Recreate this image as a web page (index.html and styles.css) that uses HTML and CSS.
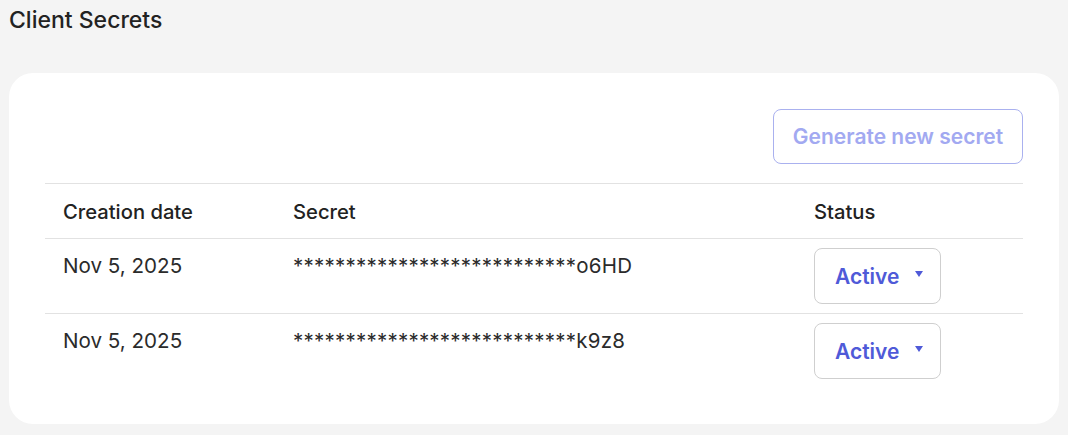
FILE: index.html
```html
<!DOCTYPE html>
<html lang="en">
<head>
<meta charset="utf-8">
<title>Client Secrets</title>
<link rel="stylesheet" href="styles.css">
</head>
<body>
<main class="page">
  <h1 class="title">Client Secrets</h1>
  <section class="card">
    <div class="actions">
      <button class="btn-generate" type="button">Generate new secret</button>
    </div>
    <div class="table">
      <div class="row head">
        <div class="cell">Creation date</div>
        <div class="cell">Secret</div>
        <div class="cell">Status</div>
      </div>
      <div class="row">
        <div class="cell">Nov 5, 2025</div>
        <div class="cell secret">***************************o6HD</div>
        <div class="cell status">
          <button class="select" type="button"><span>Active</span><span class="caret"></span></button>
        </div>
      </div>
      <div class="row last">
        <div class="cell">Nov 5, 2025</div>
        <div class="cell secret">***************************k9z8</div>
        <div class="cell status">
          <button class="select" type="button"><span>Active</span><span class="caret"></span></button>
        </div>
      </div>
    </div>
  </section>
</main>
</body>
</html>
```

FILE: styles.css
```css
* { box-sizing: border-box; }
html, body { margin: 0; padding: 0; }
body {
  background: #f4f4f4;
  font-family: Inter, "Noto Sans", sans-serif;
  color: #222;
}
.page {
  padding: 6px 9px 11px 9px;
}
.title {
  margin: 0;
  font-size: 23px;
  line-height: 28px;
  font-weight: 500;
  color: #222;
}
.card {
  margin-top: 39px;
  background: #fff;
  border-radius: 24px;
  padding: 36px 36px 35px 36px;
  height: 351px;
}
.actions {
  display: flex;
  justify-content: flex-end;
  margin-bottom: 19px;
}
.btn-generate {
  width: 250px;
  height: 55px;
  border: 1px solid #aab1ef;
  border-radius: 8px;
  background: #fff;
  color: #a2a9f1;
  font-family: Inter, "Noto Sans", sans-serif;
  font-size: 21px;
  font-weight: 600;
  padding: 0;
}
.table {
  border-top: 1px solid #e2e2e2;
}
.row {
  display: grid;
  grid-template-columns: 230px 521px 1fr;
  border-bottom: 1px solid #e2e2e2;
  height: 75px;
}
.row.head { height: 55px; }
.row.last { border-bottom: none; }
.cell {
  padding: 15px 18px 0 18px;
  font-size: 20.6px;
  line-height: 24px;
  color: #2b2b2b;
}
.head .cell {
  padding-top: 16px;
  font-size: 20.2px;
  font-weight: 500;
  color: #222;
}
.secret {
  font-size: 20.5px;
  letter-spacing: 0.22px;
  color: #2b2b2b;
}
.status {
  padding-top: 9px;
}
.select {
  display: flex;
  align-items: center;
  width: 127px;
  height: 56px;
  border: 1px solid #cfcfcf;
  border-radius: 8px;
  background: #fff;
  padding: 0 0 0 20px;
  color: #4f5ad8;
  font-family: Inter, "Noto Sans", sans-serif;
  font-size: 21px;
  font-weight: 600;
}
.caret {
  width: 0;
  height: 0;
  margin-left: 16px;
  margin-top: -4px;
  border-left: 4px solid transparent;
  border-right: 4px solid transparent;
  border-top: 6px solid #4f5ad8;
}
```
